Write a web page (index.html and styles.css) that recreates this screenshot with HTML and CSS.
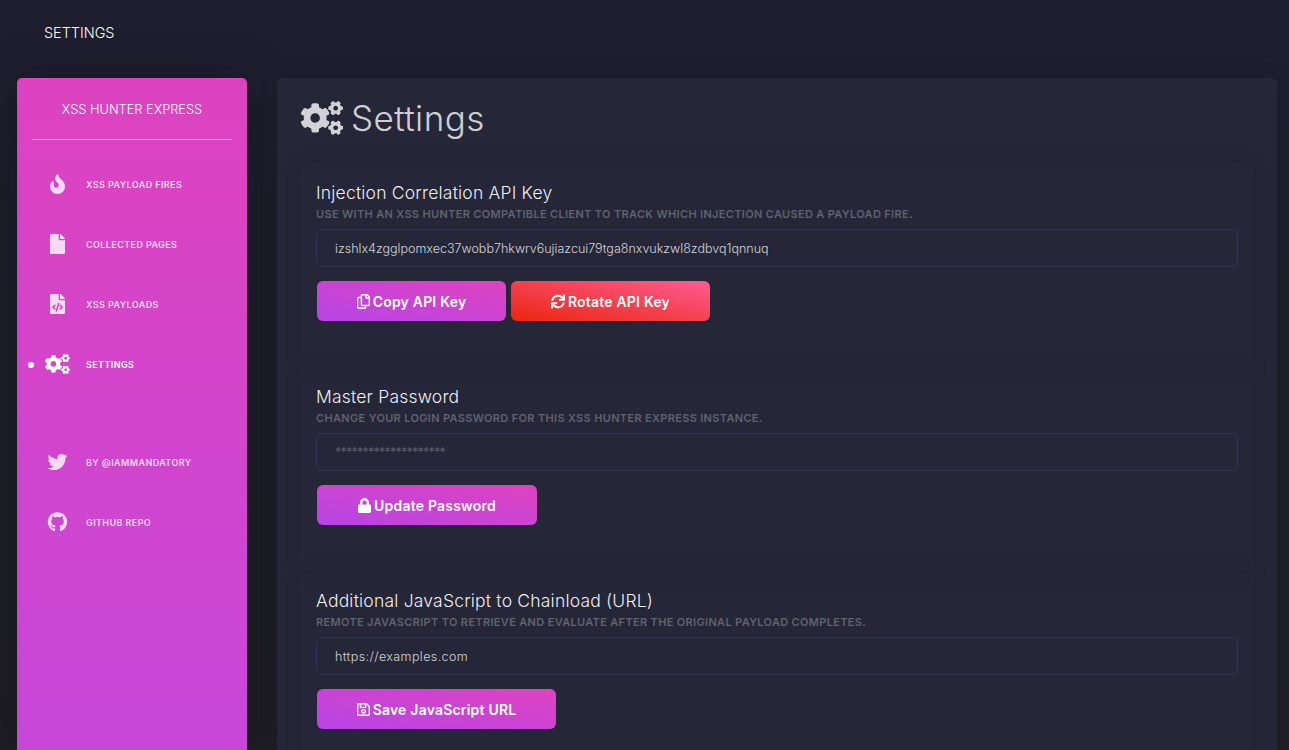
FILE: index.html
```html
<!DOCTYPE html>
<html lang="en">
<head>
    <meta charset="UTF-8">
    <title>XSS Hunter Express - Settings</title>
    <link rel="stylesheet" href="styles.css">
</head>
<body>
    <svg class="icon-defs" xmlns="http://www.w3.org/2000/svg">
        <symbol id="i-fire" viewBox="0 0 384 512"><path d="M216 23.86c0-23.8-30.65-32.77-44.15-13.04C48 191.85 224 200 224 288c0 35.63-29.11 64.46-64.86 63.99-35.17-.45-63.14-29.77-63.14-64.94v-85.51c0-21.7-26.47-32.23-41.43-16.5C27.8 213.16 0 261.33 0 320c0 105.87 86.13 192 192 192s192-86.13 192-192c0-170.29-168-193-168-296.14z"/></symbol>
        <symbol id="i-file" viewBox="0 0 384 512"><path d="M224 136V0H24C10.7 0 0 10.7 0 24v464c0 13.3 10.7 24 24 24h336c13.3 0 24-10.7 24-24V160H248c-13.2 0-24-10.8-24-24zm160-14.1v6.1H256V0h6.1c6.4 0 12.5 2.5 17 7l97.9 98c4.5 4.5 7 10.6 7 16.9z"/></symbol>
        <symbol id="i-file-code" viewBox="0 0 384 512"><path d="M384 121.941V128H256V0h6.059c6.365 0 12.47 2.529 16.971 7.029l97.941 97.941A24.005 24.005 0 0 1 384 121.941zM248 160c-13.2 0-24-10.8-24-24V0H24C10.745 0 0 10.745 0 24v464c0 13.255 10.745 24 24 24h336c13.255 0 24-10.745 24-24V160H248zM123.206 400.505a5.4 5.4 0 0 1-7.633.246l-64.866-60.812a5.4 5.4 0 0 1 0-7.879l64.866-60.812a5.4 5.4 0 0 1 7.633.246l19.579 20.885a5.4 5.4 0 0 1-.372 7.747L101.65 336l40.763 35.874a5.4 5.4 0 0 1 .372 7.747l-19.579 20.884zm51.295 50.479l-27.453-7.97a5.402 5.402 0 0 1-3.681-6.692l61.44-211.626a5.402 5.402 0 0 1 6.692-3.681l27.452 7.97a5.4 5.4 0 0 1 3.68 6.692l-61.44 211.626a5.397 5.397 0 0 1-6.69 3.681zm160.792-111.045l-64.866 60.812a5.4 5.4 0 0 1-7.633-.246l-19.58-20.885a5.4 5.4 0 0 1 .372-7.747L284.35 336l-40.763-35.874a5.4 5.4 0 0 1-.372-7.747l19.58-20.885a5.4 5.4 0 0 1 7.633-.246l64.866 60.812a5.4 5.4 0 0 1-.001 7.879z"/></symbol>
        <symbol id="i-cogs" viewBox="0 0 640 512"><path d="M512.1 191l-8.2 14.3c-3 5.3-9.4 7.5-15.1 5.4-11.8-4.4-22.6-10.7-32.1-18.6-4.6-3.8-5.8-10.5-2.8-15.7l8.2-14.3c-6.9-8-12.3-17.3-15.9-27.4h-16.5c-6 0-11.2-4.3-12.2-10.3-2-12-2.1-24.6 0-37.1 1-6 6.2-10.4 12.2-10.4h16.5c3.6-10.1 9-19.4 15.9-27.4l-8.2-14.3c-3-5.2-1.9-11.9 2.8-15.7 9.5-7.9 20.4-14.2 32.1-18.6 5.7-2.1 12.1.1 15.1 5.4l8.2 14.3c10.5-1.9 21.2-1.9 31.7 0L552 6.3c3-5.3 9.4-7.5 15.1-5.4 11.8 4.4 22.6 10.7 32.1 18.6 4.6 3.8 5.8 10.5 2.8 15.7l-8.2 14.3c6.9 8 12.3 17.3 15.9 27.4h16.5c6 0 11.2 4.3 12.2 10.3 2 12 2.1 24.6 0 37.1-1 6-6.2 10.4-12.2 10.4h-16.5c-3.6 10.1-9 19.4-15.9 27.4l8.2 14.3c3 5.2 1.9 11.9-2.8 15.7-9.5 7.9-20.4 14.2-32.1 18.6-5.7 2.1-12.1-.1-15.1-5.4l-8.2-14.3c-10.4 1.9-21.2 1.9-31.7 0zm-10.5-58.8c38.5 29.6 82.4-14.3 52.8-52.8-38.5-29.7-82.4 14.3-52.8 52.8zM386.3 286.1l33.7 16.8c10.1 5.8 14.5 18.1 10.5 29.1-8.9 24.2-26.4 46.4-42.6 65.8-7.4 8.9-20.2 11.1-30.3 5.3l-29.1-16.8c-16 13.7-34.6 24.6-54.9 31.7v33.6c0 11.6-8.3 21.6-19.7 23.6-24.6 4.2-50.4 4.4-75.9 0-11.5-2-20-11.9-20-23.6V418c-20.3-7.2-38.9-18-54.9-31.7L74 403c-10 5.8-22.9 3.6-30.3-5.3-16.2-19.4-33.3-41.6-42.2-65.7-4-10.9.4-23.2 10.5-29.1l33.3-16.8c-3.9-20.9-3.9-42.4 0-63.4L12 205.8c-10.1-5.8-14.6-18.1-10.5-29 8.9-24.2 26-46.4 42.2-65.8 7.4-8.9 20.2-11.1 30.3-5.3l29.1 16.8c16-13.7 34.6-24.6 54.9-31.7V57.1c0-11.5 8.2-21.5 19.6-23.5 24.6-4.2 50.5-4.4 76-.1 11.5 2 20 11.9 20 23.6v33.6c20.3 7.2 38.9 18 54.9 31.7l29.1-16.8c10-5.8 22.9-3.6 30.3 5.3 16.2 19.4 33.2 41.6 42.1 65.8 4 10.9.1 23.2-10 29.1l-33.7 16.8c3.9 21 3.9 42.5 0 63.5zm-117.6 21.1c59.2-77-28.7-164.9-105.7-105.7-59.2 77 28.7 164.9 105.7 105.7zm243.4 182.7l-8.2 14.3c-3 5.3-9.4 7.5-15.1 5.4-11.8-4.4-22.6-10.7-32.1-18.6-4.6-3.8-5.8-10.5-2.8-15.7l8.2-14.3c-6.9-8-12.3-17.3-15.9-27.4h-16.5c-6 0-11.2-4.3-12.2-10.3-2-12-2.1-24.6 0-37.1 1-6 6.2-10.4 12.2-10.4h16.5c3.6-10.1 9-19.4 15.9-27.4l-8.2-14.3c-3-5.2-1.9-11.9 2.8-15.7 9.5-7.9 20.4-14.2 32.1-18.6 5.7-2.1 12.1.1 15.1 5.4l8.2 14.3c10.5-1.9 21.2-1.9 31.7 0l8.2-14.3c3-5.3 9.4-7.5 15.1-5.4 11.8 4.4 22.6 10.7 32.1 18.6 4.6 3.8 5.8 10.5 2.8 15.7l-8.2 14.3c6.9 8 12.3 17.3 15.9 27.4h16.5c6 0 11.2 4.3 12.2 10.3 2 12 2.1 24.6 0 37.1-1 6-6.2 10.4-12.2 10.4h-16.5c-3.6 10.1-9 19.4-15.9 27.4l8.2 14.3c3 5.2 1.9 11.9-2.8 15.7-9.5 7.9-20.4 14.2-32.1 18.6-5.7 2.1-12.1-.1-15.1-5.4l-8.2-14.3c-10.4 1.9-21.2 1.9-31.7 0zM501.6 431c38.5 29.6 82.4-14.3 52.8-52.8-38.5-29.6-82.4 14.3-52.8 52.8z"/></symbol>
        <symbol id="i-twitter" viewBox="0 0 512 512"><path d="M459.37 151.716c.325 4.548.325 9.097.325 13.645 0 138.72-105.583 298.558-298.558 298.558-59.452 0-114.68-17.219-161.137-47.106 8.447.974 16.568 1.299 25.34 1.299 49.055 0 94.213-16.568 130.274-44.832-46.132-.975-84.792-31.188-98.112-72.772 6.498.974 12.995 1.624 19.818 1.624 9.421 0 18.843-1.3 27.614-3.573-48.081-9.747-84.143-51.98-84.143-102.985v-1.299c13.969 7.797 30.214 12.67 47.431 13.319-28.264-18.843-46.781-51.005-46.781-87.391 0-19.492 5.197-37.36 14.294-52.954 51.655 63.675 129.3 105.258 216.365 109.807-1.624-7.797-2.599-15.918-2.599-24.04 0-57.828 46.782-104.934 104.934-104.934 30.213 0 57.502 12.67 76.67 33.137 23.715-4.548 46.456-13.32 66.599-25.34-7.798 24.366-24.366 44.833-46.132 57.827 21.117-2.273 41.584-8.122 60.426-16.243-14.292 20.791-32.161 39.308-52.628 54.253z"/></symbol>
        <symbol id="i-github" viewBox="0 0 496 512"><path d="M165.9 397.4c0 2-2.3 3.6-5.2 3.6-3.3 0-5.6-1.6-5.6-3.6 0-2 2.3-3.6 5.2-3.6 3-.3 5.6 1.3 5.6 3.6zm-31.1-4.5c-.7 2 1.3 4.3 4.3 4.9 2.6 1 5.6 0 6.2-2s-1.3-4.3-4.3-5.2c-2.6-.7-5.5.3-6.2 2.3zm44.2-1.7c-2.9.7-4.9 2.6-4.6 4.9.3 2 2.9 3.3 5.9 2.6 2.9-.7 4.9-2.6 4.6-4.6-.3-1.9-3-3.2-5.9-2.9zM244.8 8C106.1 8 0 113.3 0 252c0 110.9 69.8 205.8 169.5 239.2 12.8 2.3 17.3-5.6 17.3-12.1 0-6.2-.3-40.4-.3-61.4 0 0-70 15-84.7-29.8 0 0-11.4-29.1-27.8-36.6 0 0-22.9-15.7 1.6-15.4 0 0 24.9 2 38.6 25.8 21.9 38.6 58.6 27.5 72.9 20.9 2.3-16 8.8-27.1 16-33.7-55.9-6.2-112.3-14.3-112.3-110.5 0-27.5 7.6-41.3 23.6-58.9-2.6-6.5-11.1-33.3 2.6-67.9 20.9-6.5 69 27 69 27 20-5.6 41.5-8.5 62.8-8.5s42.8 2.9 62.8 8.5c0 0 48.1-33.6 69-27 13.7 34.7 5.2 61.4 2.6 67.9 16 17.7 25.8 31.5 25.8 58.9 0 96.5-58.9 104.2-114.8 110.5 9.2 7.9 17 22.9 17 46.4 0 33.7-.3 75.4-.3 83.6 0 6.5 4.6 14.4 17.3 12.1C428.2 457.8 496 362.9 496 252 496 113.3 383.5 8 244.8 8zM97.2 352.9c-1.3 1-1 3.3.7 5.2 1.6 1.6 3.9 2.3 5.2 1 1.3-1 1-3.3-.7-5.2-1.6-1.6-3.9-2.3-5.2-1zm-10.8-8.1c-.7 1.3.3 2.9 2.3 3.9 1.6 1 3.6.7 4.3-.7.7-1.3-.3-2.9-2.3-3.9-2-.6-3.6-.3-4.3.7zm32.4 35.6c-1.6 1.3-1 4.3 1.3 6.2 2.3 2.3 5.2 2.6 6.5 1 1.3-1.3.7-4.3-1.3-6.2-2.2-2.3-5.2-2.6-6.5-1zm-11.4-14.7c-1.6 1-1.6 3.6 0 5.9 1.6 2.3 4.3 3.3 5.6 2.3 1.6-1.3 1.6-3.9 0-6.2-1.4-2.3-4-3.3-5.6-2z"/></symbol>
        <symbol id="i-copy" viewBox="0 0 448 512"><path d="M433.941 65.941l-51.882-51.882A48 48 0 0 0 348.118 0H176c-26.51 0-48 21.49-48 48v48H48c-26.51 0-48 21.49-48 48v320c0 26.51 21.49 48 48 48h224c26.51 0 48-21.49 48-48v-48h80c26.51 0 48-21.49 48-48V99.882a48 48 0 0 0-14.059-33.941zM266 464H54a6 6 0 0 1-6-6V150a6 6 0 0 1 6-6h74v224c0 26.51 21.49 48 48 48h96v42a6 6 0 0 1-6 6zm128-96H182a6 6 0 0 1-6-6V54a6 6 0 0 1 6-6h106v88c0 13.255 10.745 24 24 24h88v202a6 6 0 0 1-6 6zm6-256h-64V48h9.632c1.591 0 3.117.632 4.243 1.757l48.368 48.368a6 6 0 0 1 1.757 4.243V112z"/></symbol>
        <symbol id="i-sync" viewBox="0 0 512 512"><path d="M440.65 12.57l4 82.77A247.16 247.16 0 0 0 255.83 8C134.73 8 33.91 94.92 12.29 209.82A12 12 0 0 0 24.09 224h49.05a12 12 0 0 0 11.67-9.26 175.91 175.91 0 0 1 317-56.94l-101.46-4.86a12 12 0 0 0-12.57 12v47.41a12 12 0 0 0 12 12H500a12 12 0 0 0 12-12V12a12 12 0 0 0-12-12h-47.37a12 12 0 0 0-11.98 12.57zM255.83 432a175.61 175.61 0 0 1-146-77.8l101.8 4.87a12 12 0 0 0 12.57-12v-47.4a12 12 0 0 0-12-12H12a12 12 0 0 0-12 12V500a12 12 0 0 0 12 12h47.35a12 12 0 0 0 12-12.6l-4.15-82.57A247.17 247.17 0 0 0 255.83 504c121.11 0 221.93-86.92 243.55-201.82a12 12 0 0 0-11.8-14.18h-49.05a12 12 0 0 0-11.67 9.26A175.86 175.86 0 0 1 255.83 432z"/></symbol>
        <symbol id="i-lock" viewBox="0 0 448 512"><path d="M400 224h-24v-72C376 68.2 307.8 0 224 0S72 68.2 72 152v72H48c-26.5 0-48 21.5-48 48v192c0 26.5 21.5 48 48 48h352c26.5 0 48-21.5 48-48V272c0-26.5-21.5-48-48-48zm-104 0H152v-72c0-39.7 32.3-72 72-72s72 32.3 72 72v72z"/></symbol>
        <symbol id="i-save" viewBox="0 0 448 512"><path d="M433.941 129.941l-83.882-83.882A48 48 0 0 0 316.118 32H48C21.49 32 0 53.49 0 80v352c0 26.51 21.49 48 48 48h352c26.51 0 48-21.49 48-48V163.882a48 48 0 0 0-14.059-33.941zM272 80v80H144V80h128zm122 352H54a6 6 0 0 1-6-6V86a6 6 0 0 1 6-6h42v104c0 13.255 10.745 24 24 24h176c13.255 0 24-10.745 24-24V83.882l78.243 78.243a6 6 0 0 1 1.757 4.243V426a6 6 0 0 1-6 6zM224 232c-48.523 0-88 39.477-88 88s39.477 88 88 88 88-39.477 88-88-39.477-88-88-88zm0 128c-22.056 0-40-17.944-40-40s17.944-40 40-40 40 17.944 40 40-17.944 40-40 40z"/></symbol>
    </svg>

    <div class="topbar">SETTINGS</div>

    <div class="wrapper">
        <aside class="sidebar">
            <div class="logo">XSS HUNTER EXPRESS</div>
            <ul class="nav">
                <li class="nav-item"><span class="nav-icon"><svg class="nav-svg"><use href="#i-fire"/></svg></span>XSS PAYLOAD FIRES</li>
                <li class="nav-item"><span class="nav-icon"><svg class="nav-svg"><use href="#i-file"/></svg></span>COLLECTED PAGES</li>
                <li class="nav-item"><span class="nav-icon"><svg class="nav-svg"><use href="#i-file-code"/></svg></span>XSS PAYLOADS</li>
                <li class="nav-item active"><span class="nav-icon"><svg class="nav-svg wide"><use href="#i-cogs"/></svg></span>SETTINGS</li>
            </ul>
            <ul class="nav nav-links">
                <li class="nav-item"><span class="nav-icon"><svg class="nav-svg wide"><use href="#i-twitter"/></svg></span>BY @IAMMANDATORY</li>
                <li class="nav-item"><span class="nav-icon"><svg class="nav-svg wide"><use href="#i-github"/></svg></span>GITHUB REPO</li>
            </ul>
        </aside>

        <main class="content">
            <h1 class="page-title"><svg class="title-icon"><use href="#i-cogs"/></svg>Settings</h1>

            <section class="panel">
                <h4 class="panel-title">Injection Correlation API Key</h4>
                <h6 class="panel-sub">Use with an XSS Hunter compatible client to track which injection caused a payload fire.</h6>
                <input class="field" type="text" value="izshlx4zgglpomxec37wobb7hkwrv6ujiazcui79tga8nxvukzwl8zdbvq1qnnuq">
                <div class="btn-row">
                    <button class="btn btn-copy"><svg class="btn-icon"><use href="#i-copy"/></svg>Copy API Key</button>
                    <button class="btn btn-danger btn-rotate"><svg class="btn-icon wide"><use href="#i-sync"/></svg>Rotate API Key</button>
                </div>
            </section>

            <section class="panel">
                <h4 class="panel-title">Master Password</h4>
                <h6 class="panel-sub">Change your login password for this XSS Hunter Express instance.</h6>
                <input class="field field-password" type="text" placeholder="********************">
                <div class="btn-row">
                    <button class="btn btn-update"><svg class="btn-icon"><use href="#i-lock"/></svg>Update Password</button>
                </div>
            </section>

            <section class="panel">
                <h4 class="panel-title">Additional JavaScript to Chainload (URL)</h4>
                <h6 class="panel-sub">Remote JavaScript to retrieve and evaluate after the original payload completes.</h6>
                <input class="field field-url" type="text" value="https://examples.com">
                <div class="btn-row">
                    <button class="btn btn-save"><svg class="btn-icon"><use href="#i-save"/></svg>Save JavaScript URL</button>
                </div>
            </section>
        </main>
    </div>
</body>
</html>
```

FILE: styles.css
```css
* {
    box-sizing: border-box;
}

html, body {
    height: 100%;
}

body {
    margin: 0;
    height: 100vh;
    overflow: hidden;
    display: flex;
    flex-direction: column;
    background: linear-gradient(#1e1e2f, #1e1e24);
    color: #fff;
    font-family: "Inter", "Liberation Sans", sans-serif;
}

.icon-defs {
    display: none;
}

.topbar {
    flex: none;
    height: 78px;
    padding: 23px 0 0 44px;
    font-size: 14.4px;
    font-weight: 300;
    line-height: 19px;
}

.wrapper {
    flex: 1;
    min-height: 0;
    display: flex;
    padding-right: 12px;
}

/* sidebar */
.sidebar {
    flex: none;
    width: 230px;
    margin-left: 17px;
    padding: 0 15px;
    background: linear-gradient(180deg, #dd43bf 0, #c747d9 672px);
    border-radius: 5px 5px 0 0;
    box-shadow: 0 0 45px rgba(0, 0, 0, 0.3);
}

.logo {
    height: 62px;
    padding-top: 22px;
    border-bottom: 1px solid rgba(255, 255, 255, 0.5);
    text-align: center;
    font-size: 12.8px;
    line-height: 19px;
    font-weight: 300;
    color: #fff;
}

.nav {
    list-style: none;
    margin: 14px 0 0;
    padding: 0;
}

.nav-links {
    margin-top: 38px;
}

.nav-item {
    height: 60px;
    display: flex;
    align-items: center;
    font-size: 9px;
    font-weight: 600;
    letter-spacing: 0.4px;
    color: rgba(255, 255, 255, 0.8);
}

.nav-icon {
    width: 54px;
    padding-right: 4px;
    flex: none;
    display: flex;
    justify-content: center;
}

.nav-svg {
    width: 15px;
    height: 20px;
    fill: rgba(255, 255, 255, 0.8);
}

.nav-svg.wide {
    width: 25px;
}

.nav-item.active {
    position: relative;
    color: #fff;
}

.nav-item.active .nav-svg {
    fill: #fff;
}

.nav-item.active::before {
    content: "";
    position: absolute;
    left: -4px;
    top: 28px;
    width: 6px;
    height: 6px;
    border-radius: 50%;
    background: #fff;
}

/* main card */
.content {
    flex: 1;
    min-width: 0;
    margin-left: 30px;
    padding: 15px 24px 0;
    background: #252738;
    border-radius: 5px 5px 0 0;
    box-shadow: 0 1px 20px rgba(0, 0, 0, 0.1);
}

.page-title {
    margin: 0 0 20px;
    height: 50px;
    display: flex;
    align-items: center;
    font-size: 35px;
    font-weight: 300;
    letter-spacing: 0.4px;
    color: rgba(255, 255, 255, 0.8);
}

.title-icon {
    width: 42px;
    height: 34px;
    margin-right: 8px;
    fill: rgba(255, 255, 255, 0.8);
}

.panel {
    height: 204px;
    padding: 20px 15px 0;
    border-radius: 5px;
    box-shadow: 0 1px 20px rgba(0, 0, 0, 0.08);
}

.panel-title {
    margin: 0;
    font-size: 17.5px;
    font-weight: 300;
    letter-spacing: 0.2px;
    line-height: 20px;
    color: rgba(255, 255, 255, 0.95);
}

.panel-sub {
    margin: 4px 0 0;
    font-size: 11px;
    font-weight: 600;
    letter-spacing: 0.33px;
    line-height: 14px;
    text-transform: uppercase;
    color: rgba(255, 255, 255, 0.28);
}

.field {
    display: block;
    width: 100%;
    height: 38px;
    margin-top: 8px;
    padding: 0 18px;
    background: transparent;
    border: 1px solid #2b3553;
    border-radius: 6px;
    font-family: inherit;
    font-size: 12.5px;
    font-weight: 300;
    color: rgba(255, 255, 255, 0.8);
    outline: none;
}

.field::placeholder {
    color: rgba(255, 255, 255, 0.3);
}

.field-password {
    letter-spacing: -0.75px;
}

.field-url {
    letter-spacing: 0.4px;
}

.btn-row {
    display: flex;
    gap: 5px;
    margin: 14px 0 0 1px;
}

.btn {
    height: 40px;
    padding-bottom: 1px;
    display: flex;
    align-items: center;
    justify-content: center;
    border: none;
    border-radius: 6px;
    background: linear-gradient(to bottom left, #df43bf, #b644e6);
    color: #fff;
    font-family: inherit;
    font-size: 14px;
    font-weight: 600;
    letter-spacing: 0.2px;
}

.btn-danger {
    background: linear-gradient(to bottom left, #fd5d93, #ec250d);
}

.btn-copy { width: 189px; }
.btn-rotate { width: 199px; }
.btn-update { width: 220px; }
.btn-save { width: 239px; }

.btn-icon {
    width: 13px;
    height: 15px;
    margin-right: 3px;
    fill: #fff;
}

.btn-icon.wide {
    width: 14px;
}
```
